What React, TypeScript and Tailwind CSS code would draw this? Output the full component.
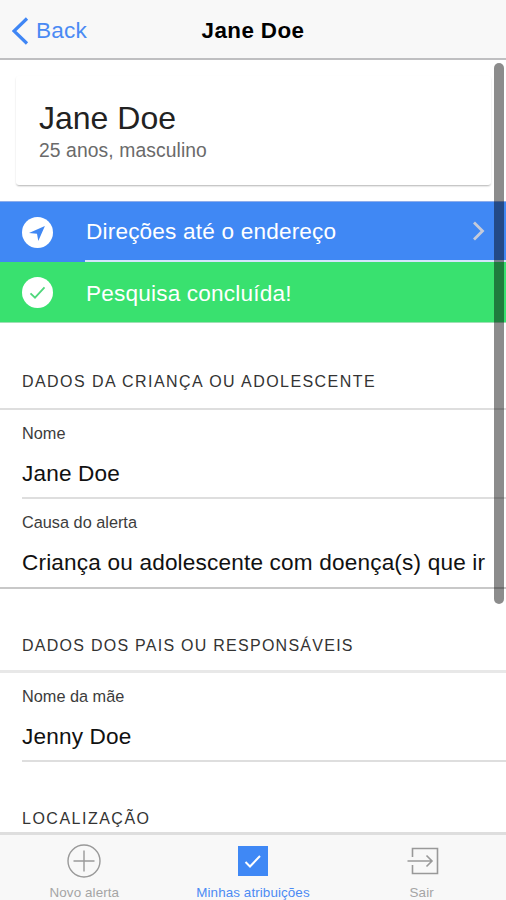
interface FieldProps {
  label: string;
  value: string;
  last?: boolean;
}

interface SectionProps {
  title: string;
  titleClass: string;
  children?: React.ReactNode;
}

function Field({ label, value, last = false }: FieldProps) {
  return (
    <div className={last ? "h-[88px] pl-[22px]" : "h-[89px] ml-[22px] border-b-2 border-[#dedede]"}>
      <div className="h-[45px] pt-[11px] text-[16.3px] leading-6 text-[#3c3c3c]">{label}</div>
      <div className="whitespace-nowrap text-[22.6px] leading-[38px] tracking-[0.17px] text-[#111]">{value}</div>
    </div>
  );
}

function Section({ title, titleClass, children }: SectionProps) {
  return (
    <section>
      <h2 className={titleClass}>{title}</h2>
      {children}
    </section>
  );
}

function Header() {
  return (
    <header className="grid h-[60px] shrink-0 grid-cols-3 items-center border-b-2 border-[#bfbfc1] bg-[#f8f8f8] pt-[3px]">
      <button className="flex items-center pl-3 text-[22.6px] leading-none tracking-[0.2px] text-[#4a8af4]">
        <svg width="17" height="28" viewBox="0 0 17 28" fill="none" stroke="#3f86f5" strokeWidth="3.2">
          <path d="M15 1.5 2 14l13 12.5" />
        </svg>
        <span className="ml-[7px] pt-0.5">Back</span>
      </button>
      <h1 className="pt-0.5 text-center text-[22.4px] font-bold leading-none tracking-[0.4px] text-black">Jane Doe</h1>
    </header>
  );
}

function Actions() {
  return (
    <div className="text-[22.6px] leading-none tracking-[0.18px] text-white">
      <div className="flex h-[61px] items-center border-t border-[#8eadea] bg-[#4088f4] pl-[22px]">
        <svg width="31" height="31" viewBox="0 0 31 31">
          <circle cx="15.5" cy="15.5" r="15.5" fill="#fff" />
          <path d="M22.9 8.9 7 16l8 .8 1.3 7.2z" fill="#4088f4" />
        </svg>
        <div className="ml-8 flex h-full flex-1 items-center justify-between border-b-2 border-[#d5e4fc]">
          <span className="pl-px pt-[3px]">Direções até o endereço</span>
          <svg className="mr-[21px]" width="13" height="20" viewBox="0 0 13 20" fill="none" stroke="#c5cbda" strokeWidth="2.8">
            <path d="M2 1.5 10.5 10 2 18.5" />
          </svg>
        </div>
      </div>
      <div className="flex h-[61px] items-center border-b border-[#a0dfb5] bg-[#39e16f] pl-[22px]">
        <svg width="31" height="31" viewBox="0 0 31 31">
          <circle cx="15.5" cy="15.5" r="15.5" fill="#fff" />
          <path d="m8.5 16.3 4.5 4.3 9.5-10.2" fill="none" stroke="#4fd77c" strokeWidth="1.8" />
        </svg>
        <span className="ml-[33px] pt-[5px]">Pesquisa concluída!</span>
      </div>
    </div>
  );
}

function TabBar() {
  return (
    <nav className="grid h-[68px] shrink-0 grid-cols-3 border-t-[3px] border-[#dedede] bg-[#f8f8f8] text-[13.4px] leading-4 tracking-[0.1px] text-[#a5a5a5]">
      <a className="flex flex-col items-center pt-[9px]">
        <svg width="34" height="34" viewBox="0 0 34 34" fill="none" stroke="#999" strokeWidth="1.4">
          <circle cx="17" cy="17" r="16" />
          <path d="M17 6.5v21M6.5 17h21" />
        </svg>
        <span className="mt-[7px]">Novo alerta</span>
      </a>
      <a className="flex flex-col items-center pt-[9px] text-[#4c8bf4]">
        <svg width="34" height="34" viewBox="0 0 34 34">
          <path d="M2 2h30v30H2z" fill="#3f88f5" />
          <path d="m9.5 18 4.5 4.5 10-10.5" fill="none" stroke="#fff" strokeWidth="2" />
        </svg>
        <span className="mt-[7px]">Minhas atribuições</span>
      </a>
      <a className="flex flex-col items-center pt-[9px]">
        <svg width="34" height="34" viewBox="0 0 34 34" fill="none" stroke="#999" strokeWidth="1.6">
          <path d="M7.5 13V4.5h25v25h-25V21M2.5 17h24M21.5 11.5 27 17l-5.5 5.5" />
        </svg>
        <span className="mt-[7px]">Sair</span>
      </a>
    </nav>
  );
}

export default function App() {
  return (
    <div className="relative flex h-[900px] w-[506px] flex-col overflow-hidden bg-white font-['Liberation_Sans',Arial,sans-serif]">
      <Header />
      <main className="min-h-0 flex-1 overflow-hidden">
        <div className="mx-4 mt-4 h-[109px] w-[475px] rounded-[3px] pl-[23px] pt-[23px] shadow-[0_2px_2px_-1px_rgba(0,0,0,0.2),0_1px_2px_rgba(0,0,0,0.12)]">
          <div className="text-[32px] leading-[38px] text-[#222]">Jane Doe</div>
          <div className="mt-[2px] text-[19.3px] leading-6 tracking-[0.1px] text-[#6a6a6a]">25 anos, masculino</div>
        </div>
        <div className="mt-4">
          <Actions />
        </div>
        <Section
          title="DADOS DA CRIANÇA OU ADOLESCENTE"
          titleClass="h-[87px] border-b-2 border-[#dedede] pl-[22px] pt-[47px] text-[16px] leading-6 tracking-[1.44px] text-[#333]"
        >
          <Field label="Nome" value="Jane Doe" />
          <Field label="Causa do alerta" value="Criança ou adolescente com doença(s) que ir" last />
        </Section>
        <Section
          title="DADOS DOS PAIS OU RESPONSÁVEIS"
          titleClass="h-[86px] border-b-[3px] border-t-2 border-b-[#e8e8e8] border-t-[#c8c8c8] pl-[22px] pt-[45px] text-[16px] leading-6 tracking-[1.26px] text-[#333]"
        >
          <Field label="Nome da mãe" value="Jenny Doe" />
        </Section>
        <Section
          title="LOCALIZAÇÃO"
          titleClass="pl-[22px] pt-[45px] text-[16px] leading-6 tracking-[1.5px] text-[#333]"
        />
      </main>
      <TabBar />
      {/* scroll indicator */}
      <div className="absolute left-[494px] top-[63px] h-[541px] w-[10px] rounded-full bg-black/45" />
    </div>
  );
}
